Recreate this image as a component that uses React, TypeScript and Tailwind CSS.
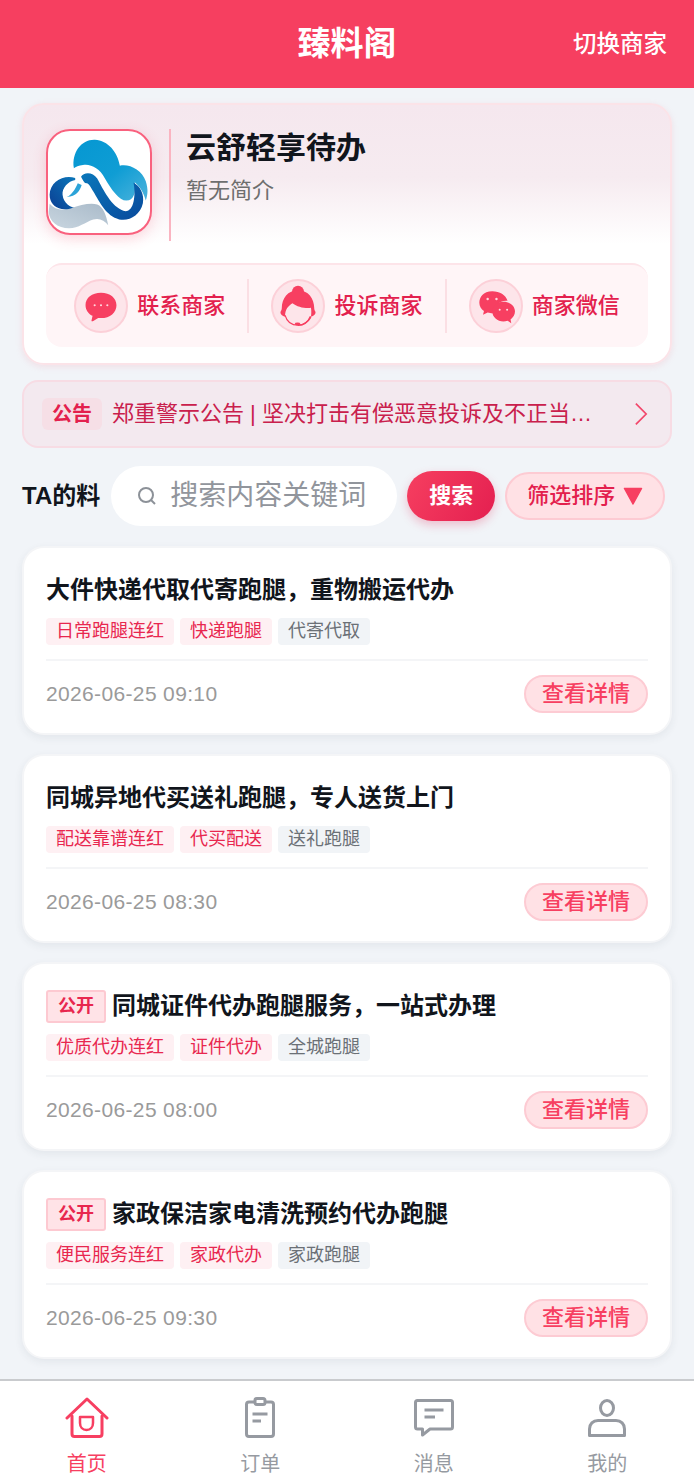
import React from "react";

const FONT = "[font-family:'Liberation_Sans','Noto_Sans_CJK_SC',sans-serif]";

function Logo() {
  return (
    <svg viewBox="20 25 315 315" className="w-full h-full block">
      <defs>
        <linearGradient id="cl" x1="0" y1="0" x2="1" y2="1">
          <stop offset="0" stopColor="#0597d2" />
          <stop offset="0.55" stopColor="#0f9dd4" />
          <stop offset="1" stopColor="#4cb3dc" />
        </linearGradient>
        <linearGradient id="db" x1="0" y1="0" x2="1" y2="1">
          <stop offset="0" stopColor="#0a77ba" />
          <stop offset="1" stopColor="#094a9c" />
        </linearGradient>
        <linearGradient id="lb" x1="1" y1="0" x2="0" y2="1">
          <stop offset="0" stopColor="#0b79bb" />
          <stop offset="1" stopColor="#0c3e93" />
        </linearGradient>
        <linearGradient id="gy" x1="0" y1="1" x2="1" y2="0">
          <stop offset="0" stopColor="#c9d6e0" />
          <stop offset="1" stopColor="#a9bac9" />
        </linearGradient>
      </defs>
      <path d="M100 140C92 90 125 50 165 52C205 54 235 90 242 132C270 125 310 145 322 180C330 205 328 222 322 240C316 215 303 196 288 183C292 215 285 240 262 240C240 240 215 205 195 170C180 140 150 125 128 130C115 132 105 135 100 140Z" fill="url(#cl)" />
      <path d="M122 166C130 152 158 150 172 172C190 204 215 260 255 272C285 278 292 225 284 184C305 196 318 220 313 248C305 285 270 305 240 298C200 288 180 245 160 212C150 196 145 185 135 186C130 182 128 176 122 166Z" fill="url(#db)" />
      <path d="M104 170C70 158 26 180 25 222C25 245 40 262 62 266C82 270 100 268 112 264C90 262 68 250 65 222C63 200 82 180 104 176Z" fill="url(#lb)" />
      <path d="M25 250C40 268 65 272 90 264C120 254 150 246 172 252C190 258 200 285 206 316C195 300 178 293 160 298C135 306 115 325 85 325C50 325 25 305 22 275Z" fill="url(#gy)" />
      <path d="M112 186L124 192C118 210 108 228 78 229C92 222 104 206 112 186Z" fill="#2ba3d8" />
    </svg>
  );
}

function Bubble() {
  return (
    <svg viewBox="0 0 54 54" className="w-[38px] h-[38px]">
      <path d="M27 8C14 8 5 15.500 5 25.500C5 33 9.500 38.500 15 41L13.500 47.500C13.300 48.700 14.500 49.200 15.500 48.500L23 44C24.500 44.200 25.700 44.200 27 44.200C40 44.200 49 36 49 25.800C49 15.500 40 8 27 8Z" fill="#f73f61" />
      <circle cx="18" cy="26" r="1.500" fill="#ffd9df" />
      <circle cx="27" cy="26" r="1.500" fill="#ffd9df" />
      <circle cx="36" cy="26" r="1.500" fill="#ffd9df" />
    </svg>
  );
}

function Support() {
  return (
    <svg viewBox="0 0 54 54" className="w-[54px] h-[54px]">
      <circle cx="27" cy="11.500" r="6.500" fill="#f73f61" />
      <path d="M27 10C16 10 9.500 19 9.500 29C9.500 31 9 32 8 33.500C8 36 10 38 13 38.500C13 30 16.500 27 21 24C26 28 35 30 41 29C41.500 32 41.500 35 41 38.500C44 38 46 36 46 33.500C45 32 44.500 31 44.500 29C44.500 19 38 10 27 10Z" fill="#f73f61" />
      <path d="M13 37C15 44 20 47.800 27 47.800C32 47.800 37 46 41 39" fill="none" stroke="#f73f61" strokeWidth="1.200" />
      <ellipse cx="26.500" cy="46.500" rx="3" ry="1.600" fill="#f73f61" />
      <path d="M27 47.800C33 47.500 38 44 40.500 38" fill="none" stroke="#f73f61" strokeWidth="1.500" />
    </svg>
  );
}

function Wechat() {
  return (
    <svg viewBox="0 0 54 54" className="w-[54px] h-[54px]">
      <path d="M23 11C13 11 9 17.500 9 23.500C9 27.500 11 30.500 14 32.500L13 36.500L18 34C20 34.600 21.500 34.800 23 34.800C24 34.800 25 34.700 26 34.500C24 27 31 20.500 39.500 21.300C37.500 15 31 11 23 11Z" fill="#f73f61" />
      <circle cx="18" cy="19.500" r="1.300" fill="#ffd9df" />
      <circle cx="27.500" cy="19.500" r="1.300" fill="#ffd9df" />
      <path d="M35 22.500C27 22.500 23 28 23 33C23 39 28.500 43.800 35 43.800C36.500 43.800 38 43.500 39.500 43L43.500 45.500L42.700 41.500C45.500 39.500 47.500 36.500 47.500 33C47.500 27.500 42.500 22.500 35 22.500Z" fill="#f73f61" />
      <circle cx="31" cy="31" r="1.100" fill="#ffd9df" />
      <circle cx="39" cy="31" r="1.100" fill="#ffd9df" />
    </svg>
  );
}

function Action({ icon, label }: { icon: React.ReactNode; label: string }) {
  return (
    <div className="flex-1 flex items-center justify-center gap-[9px]">
      <div className="w-[54px] h-[54px] rounded-full bg-[#fde5ea] border-2 border-[#fcd0d8] flex items-center justify-center overflow-hidden shrink-0">
        {icon}
      </div>
      <span className="text-[22px] leading-[30px] text-[#e3204d] font-medium whitespace-nowrap">{label}</span>
    </div>
  );
}

function Tag({ label, gray }: { label: string; gray?: boolean }) {
  return (
    <span
      className={
        "h-[27px] px-[10px] rounded-[4px] text-[18px] leading-[27px] whitespace-nowrap " +
        (gray ? "bg-[#f1f4f7] text-[#6b7076]" : "bg-[#fef0f3] text-[#e8274f]")
      }
    >
      {label}
    </span>
  );
}

function Post({ title, pub, tags, time }: { title: string; pub?: boolean; tags: string[]; time: string }) {
  return (
    <div className="h-[189px] shrink-0 mb-[19px] bg-white rounded-[22px] border-2 border-[#f4f5f7] shadow-[0_3px_8px_rgba(40,50,70,0.07)] px-[22px] pt-[22px]">
      <div className="h-[40px] flex items-center gap-[6px]">
        {pub && (
          <span className="w-[60px] h-[33px] rounded-[3px] bg-[#ffe3e7] border-2 border-[#fdc9d1] text-[18px] leading-[29px] text-center text-[#e8274f] font-semibold shrink-0">
            公开
          </span>
        )}
        <span className="text-[24px] leading-[36px] font-semibold text-[#11151c] whitespace-nowrap">{title}</span>
      </div>
      <div className={"flex gap-[6px] " + (pub ? "mt-[8px]" : "mt-[8px]")}>
        <Tag label={tags[0]} />
        <Tag label={tags[1]} />
        <Tag label={tags[2]} gray />
      </div>
      <div className="h-[2px] bg-[#f4f5f7] mt-[14px]" />
      <div className="flex items-center justify-between mt-[14px]">
        <span className="text-[21px] leading-[30px] tracking-[0.35px] text-[#9a9a9a]">{time}</span>
        <span className="w-[124px] h-[38px] rounded-full bg-[#ffe1e5] border-2 border-[#fdcbd3] text-[22px] leading-[34px] text-center text-[#f73f61] font-medium">
          查看详情
        </span>
      </div>
    </div>
  );
}

function TabItem({ icon, label, active }: { icon: React.ReactNode; label: string; active?: boolean }) {
  return (
    <div className="flex-1 flex flex-col items-center">
      <div className="h-[46px] flex items-center justify-center">{icon}</div>
      <span className={"text-[20px] leading-[28px] mt-[9px] " + (active ? "text-[#f73f61]" : "text-[#969aa1]")}>{label}</span>
    </div>
  );
}

export default function App() {
  return (
    <div className={"w-[694px] h-[1478px] flex flex-col overflow-hidden bg-[#f1f4f8] " + FONT}>
      <header className="h-[88px] shrink-0 bg-[#f63f60] grid grid-cols-[1fr_auto_1fr] items-center text-white">
        <div />
        <div className="text-[33px] leading-[44px] font-bold">臻料阁</div>
        <div className="justify-self-end pr-[27px] text-[23.500px] leading-[32px] font-medium whitespace-nowrap">切换商家</div>
      </header>

      <main className="flex-1 min-h-0 px-[22px] pt-[15px] flex flex-col">
        <section className="h-[262px] shrink-0 rounded-[22px] border-2 border-[#fbe3e8] bg-[linear-gradient(180deg,#f5e7ee_0%,#f6ebf0_28%,#ffffff_54%)] shadow-[0_2px_6px_rgba(240,150,170,0.22)] px-[22px] pt-[24px]">
          <div className="flex h-[112px]">
            <div className="w-[106px] h-[106px] rounded-[24px] border-2 border-[#f9617e] bg-white overflow-hidden shrink-0 shadow-[0_4px_14px_rgba(246,63,96,0.2)]">
              <Logo />
            </div>
            <div className="w-[2px] h-[112px] bg-[#fab4c1] ml-[17px] mr-[15px] shrink-0" />
            <div>
              <div className="text-[30px] leading-[38px] font-semibold text-[#11151c] mt-[0px]">云舒轻享待办</div>
              <div className="text-[22px] leading-[30px] text-[#6e6e6e] mt-[9px]">暂无简介</div>
            </div>
          </div>
          <div className="h-[84px] mt-[22px] rounded-[16px] bg-[#fff5f7] border-t-2 border-[#fde4e9] flex items-center px-[6px]">
            <Action icon={<Bubble />} label="联系商家" />
            <div className="w-[2px] h-[54px] bg-[#fbdfe4] shrink-0" />
            <Action icon={<Support />} label="投诉商家" />
            <div className="w-[2px] h-[54px] bg-[#fbdfe4] shrink-0" />
            <Action icon={<Wechat />} label="商家微信" />
          </div>
        </section>

        <section className="h-[68px] shrink-0 mt-[15px] rounded-[16px] border-2 border-[#f7dce4] bg-[#f3e9ef] flex items-center pl-[18px] pr-[22px]">
          <span className="w-[60px] h-[32px] rounded-[6px] bg-[#f6dfe6] text-center text-[20px] leading-[32px] text-[#e3204d] font-semibold shrink-0">
            公告
          </span>
          <span className="ml-[10px] w-[486px] truncate text-[22px] leading-[30px] text-[#c9204c] whitespace-nowrap">
            郑重警示公告 | 坚决打击有偿恶意投诉及不正当竞争行为
          </span>
          <svg viewBox="0 0 16 28" className="w-[14px] h-[24px] ml-auto" fill="none" stroke="#f2476b" strokeWidth="2">
            <path d="M2 2L14 14L2 26" />
          </svg>
        </section>

        <section className="h-[60px] shrink-0 mt-[18px] flex items-center">
          <span className="text-[24px] leading-[32px] font-semibold text-[#11151c] whitespace-nowrap">TA的料</span>
          <div className="ml-[11px] w-[286px] h-[60px] rounded-full bg-white flex items-center pl-[26px]">
            <svg viewBox="0 0 20 20" className="w-[20px] h-[20px]" fill="none" stroke="#8c9198" strokeWidth="2">
              <circle cx="9" cy="9" r="7" />
              <path d="M14 14L18 18" />
            </svg>
            <span className="ml-[13px] text-[28px] leading-[36px] text-[#91959c] whitespace-nowrap">搜索内容关键词</span>
          </div>
          <div className="ml-[10px] w-[88px] h-[50px] rounded-full bg-[linear-gradient(120deg,#f63f60,#e41f50)] text-white text-[22px] leading-[50px] text-center font-bold shadow-[0_4px_10px_rgba(228,31,80,0.25)]">
            搜索
          </div>
          <div className="ml-[10px] w-[160px] h-[48px] rounded-full bg-[#ffe1e5] border-2 border-[#fdcbd3] flex items-center justify-center gap-[8px] text-[#e3204d] text-[22px] font-medium">
            <span className="leading-[30px]">筛选排序</span>
            <svg viewBox="0 0 20 18" className="w-[20px] h-[18px]">
              <path d="M1.500 1.500H18.500L10 17Z" fill="#f73f61" stroke="#f73f61" strokeWidth="1.500" strokeLinejoin="round" />
            </svg>
          </div>
        </section>

        <div className="mt-[20px] flex flex-col">
          <Post title="大件快递代取代寄跑腿，重物搬运代办" tags={["日常跑腿连红", "快递跑腿", "代寄代取"]} time="2026-06-25 09:10" />
          <Post title="同城异地代买送礼跑腿，专人送货上门" tags={["配送靠谱连红", "代买配送", "送礼跑腿"]} time="2026-06-25 08:30" />
          <Post pub title="同城证件代办跑腿服务，一站式办理" tags={["优质代办连红", "证件代办", "全城跑腿"]} time="2026-06-25 08:00" />
          <Post pub title="家政保洁家电清洗预约代办跑腿" tags={["便民服务连红", "家政代办", "家政跑腿"]} time="2026-06-25 09:30" />
        </div>
      </main>

      <nav className="h-[99px] shrink-0 bg-white border-t-2 border-[#c9cbce] flex pt-[14px]">
        <TabItem
          active
          label="首页"
          icon={
            <svg viewBox="0 0 44 42" className="w-[44px] h-[42px]" fill="none" stroke="#f73f61" strokeWidth="3" strokeLinecap="round" strokeLinejoin="round">
              <path d="M2 21L22 2L42 21" />
              <path d="M7 19V37C7 38.500 8 39.500 9.500 39.500H34.500C36 39.500 37 38.500 37 37V19" />
              <path d="M15 20H28V26C28 30 25.500 33 21.500 33C17.500 33 15 30 15 26Z" strokeWidth="2.500" />
            </svg>
          }
        />
        <TabItem
          label="订单"
          icon={
            <svg viewBox="0 0 30 42" className="w-[30px] h-[42px]" fill="none" stroke="#969aa1" strokeWidth="3" strokeLinejoin="round">
              <rect x="10" y="1.500" width="10" height="6" rx="2" />
              <path d="M10 5H4C2.500 5 1.500 6 1.500 7.500V37C1.500 38.500 2.500 39.500 4 39.500H26C27.500 39.500 28.500 38.500 28.500 37V7.500C28.500 6 27.500 5 26 5H20" />
              <path d="M7.500 17H22.500M7.500 24H16" />
            </svg>
          }
        />
        <TabItem
          label="消息"
          icon={
            <svg viewBox="0 0 40 38" className="w-[40px] h-[38px]" fill="none" stroke="#969aa1" strokeWidth="3" strokeLinejoin="round">
              <path d="M3.500 1.500H36.500C37.700 1.500 38.500 2.300 38.500 3.500V28C38.500 29.200 37.700 30 36.500 30H16L8.500 36V30H3.500C2.300 30 1.500 29.200 1.500 28V3.500C1.500 2.300 2.300 1.500 3.500 1.500Z" />
              <path d="M10.500 11H29.500M10.500 18H21" />
            </svg>
          }
        />
        <TabItem
          label="我的"
          icon={
            <svg viewBox="0 0 38 38" className="w-[38px] h-[38px]" fill="none" stroke="#969aa1" strokeWidth="3" strokeLinejoin="round">
              <ellipse cx="19" cy="9" rx="6.500" ry="7.500" />
              <path d="M1.500 36.500V30C1.500 25 5 21.500 10 21.500H28C33 21.500 36.500 25 36.500 30V36.500Z" />
            </svg>
          }
        />
      </nav>
    </div>
  );
}
